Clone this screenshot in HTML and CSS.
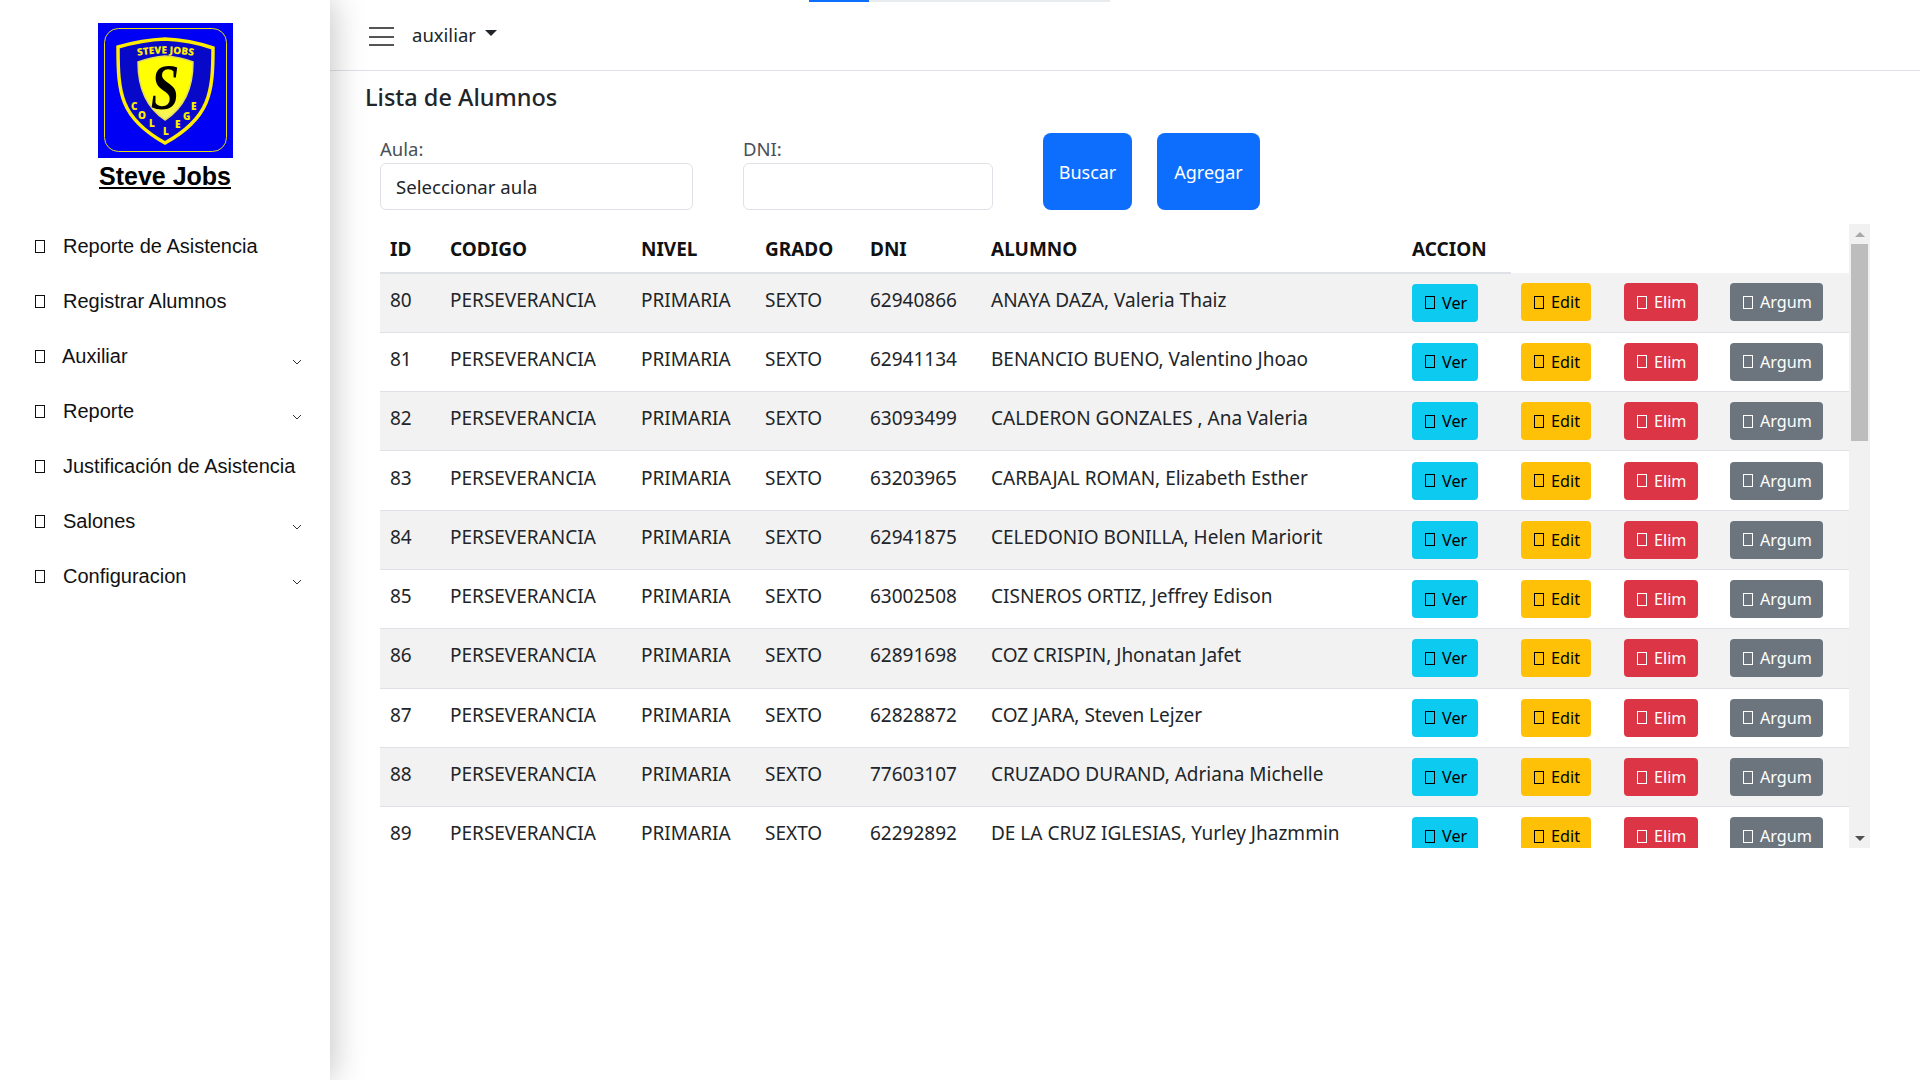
FILE: index.html
```html
<!DOCTYPE html>
<html lang="es">
<head>
  <meta charset="UTF-8">
  <meta name="viewport" content="width=device-width, initial-scale=1.0">
  <title>Lista de Alumnos</title>
  <link rel="stylesheet" href="styles.css">
</head>
<body>
  <div class="top-progress"><div class="top-progress-bar"></div></div>

  <aside class="sidebar">
    <div class="brand">
      <svg class="brand-logo" viewBox="0 0 135 135" width="135" height="135">
        <defs>
          <path id="arc-top" d="M33 34 Q67 27 102 34"/>
          <linearGradient id="inner-fill" x1="0" y1="0" x2="0" y2="1">
            <stop offset="0.6" stop-color="#ffff00"/>
            <stop offset="1" stop-color="#f4f070"/>
          </linearGradient>
        </defs>
        <rect width="135" height="135" fill="#0000f5"/>
        <rect x="6.5" y="5.5" width="122" height="123" rx="14" fill="none" stroke="#e8dc10" stroke-width="1"/>
        <path d="M20 24 Q44 17 67 16 Q92 17 115 25 C115 70 112 95 67 120 C22 95 20 70 20 24Z" fill="#0808c8" stroke="#ffec00" stroke-width="3.5"/>
        <path d="M40 39 Q54 34 67 33 Q82 34 95 39 C95 65 86 85 67 97 C49 85 40 65 40 39Z" fill="url(#inner-fill)" stroke="#e6dc5a" stroke-width="1.5"/>
        <text class="logo-text"><textPath href="#arc-top" startOffset="50%" text-anchor="middle">STEVE JOBS</textPath></text>
        <text class="logo-text" x="33 40 51 65 77 85 93" y="87 96 104 112 105 97 87">COLLEGE</text>
        <text class="logo-s" transform="translate(67 86) scale(0.78 1)" text-anchor="middle">S</text>
      </svg>
      <a class="brand-name" href="#">Steve Jobs</a>
    </div>
    <nav class="menu">
      <a class="menu-item" href="#"><span class="tofu"></span><span class="menu-label">Reporte de Asistencia</span></a>
      <a class="menu-item" href="#"><span class="tofu"></span><span class="menu-label">Registrar Alumnos</span></a>
      <a class="menu-item" href="#"><span class="tofu"></span><span class="menu-label menu-label-tight">Auxiliar</span>
        <svg class="chevron" viewBox="0 0 10 6" width="10" height="6"><path d="M1 1l4 4 4-4" fill="none" stroke="#333" stroke-width="1"/></svg></a>
      <a class="menu-item" href="#"><span class="tofu"></span><span class="menu-label">Reporte</span>
        <svg class="chevron" viewBox="0 0 10 6" width="10" height="6"><path d="M1 1l4 4 4-4" fill="none" stroke="#333" stroke-width="1"/></svg></a>
      <a class="menu-item" href="#"><span class="tofu"></span><span class="menu-label">Justificación de Asistencia</span></a>
      <a class="menu-item" href="#"><span class="tofu"></span><span class="menu-label">Salones</span>
        <svg class="chevron" viewBox="0 0 10 6" width="10" height="6"><path d="M1 1l4 4 4-4" fill="none" stroke="#333" stroke-width="1"/></svg></a>
      <a class="menu-item" href="#"><span class="tofu"></span><span class="menu-label">Configuracion</span>
        <svg class="chevron" viewBox="0 0 10 6" width="10" height="6"><path d="M1 1l4 4 4-4" fill="none" stroke="#333" stroke-width="1"/></svg></a>
    </nav>
  </aside>

  <div class="main">
    <header class="navbar">
      <button class="burger" type="button"><span></span><span></span><span></span></button>
      <span class="user">auxiliar</span>
      <span class="caret"></span>
    </header>

    <section class="content">
      <h2 class="title">Lista de Alumnos</h2>

      <form class="filters">
        <div class="field field-aula">
          <label for="aula">Aula:</label>
          <select id="aula"><option>Seleccionar aula</option></select>
        </div>
        <div class="field field-dni">
          <label for="dni">DNI:</label>
          <input type="text" id="dni">
        </div>
        <button class="btn-big btn-buscar" type="button">Buscar</button>
        <button class="btn-big btn-agregar" type="button">Agregar</button>
      </form>

      <div class="table-box">
        <div class="table-scroll">
          <table>
            <colgroup>
              <col class="c-id"><col class="c-codigo"><col class="c-nivel"><col class="c-grado"><col class="c-dni"><col class="c-alumno">
              <col class="c-ver"><col class="c-edit"><col class="c-elim"><col class="c-argum">
            </colgroup>
            <thead>
              <tr><th>ID</th><th>CODIGO</th><th>NIVEL</th><th>GRADO</th><th>DNI</th><th>ALUMNO</th><th>ACCION</th></tr>
            </thead>
            <tbody>
              <tr><td>80</td><td>PERSEVERANCIA</td><td>PRIMARIA</td><td>SEXTO</td><td>62940866</td><td>ANAYA DAZA, Valeria Thaiz</td>
                <td><a class="btn btn-ver"><span class="tofu"></span>Ver</a></td><td><a class="btn btn-edit"><span class="tofu"></span>Edit</a></td><td><a class="btn btn-elim"><span class="tofu"></span>Elim</a></td><td><a class="btn btn-argum"><span class="tofu"></span>Argum</a></td></tr>
              <tr><td>81</td><td>PERSEVERANCIA</td><td>PRIMARIA</td><td>SEXTO</td><td>62941134</td><td>BENANCIO BUENO, Valentino Jhoao</td>
                <td><a class="btn btn-ver"><span class="tofu"></span>Ver</a></td><td><a class="btn btn-edit"><span class="tofu"></span>Edit</a></td><td><a class="btn btn-elim"><span class="tofu"></span>Elim</a></td><td><a class="btn btn-argum"><span class="tofu"></span>Argum</a></td></tr>
              <tr><td>82</td><td>PERSEVERANCIA</td><td>PRIMARIA</td><td>SEXTO</td><td>63093499</td><td>CALDERON GONZALES , Ana Valeria</td>
                <td><a class="btn btn-ver"><span class="tofu"></span>Ver</a></td><td><a class="btn btn-edit"><span class="tofu"></span>Edit</a></td><td><a class="btn btn-elim"><span class="tofu"></span>Elim</a></td><td><a class="btn btn-argum"><span class="tofu"></span>Argum</a></td></tr>
              <tr><td>83</td><td>PERSEVERANCIA</td><td>PRIMARIA</td><td>SEXTO</td><td>63203965</td><td>CARBAJAL ROMAN, Elizabeth Esther</td>
                <td><a class="btn btn-ver"><span class="tofu"></span>Ver</a></td><td><a class="btn btn-edit"><span class="tofu"></span>Edit</a></td><td><a class="btn btn-elim"><span class="tofu"></span>Elim</a></td><td><a class="btn btn-argum"><span class="tofu"></span>Argum</a></td></tr>
              <tr><td>84</td><td>PERSEVERANCIA</td><td>PRIMARIA</td><td>SEXTO</td><td>62941875</td><td>CELEDONIO BONILLA, Helen Mariorit</td>
                <td><a class="btn btn-ver"><span class="tofu"></span>Ver</a></td><td><a class="btn btn-edit"><span class="tofu"></span>Edit</a></td><td><a class="btn btn-elim"><span class="tofu"></span>Elim</a></td><td><a class="btn btn-argum"><span class="tofu"></span>Argum</a></td></tr>
              <tr><td>85</td><td>PERSEVERANCIA</td><td>PRIMARIA</td><td>SEXTO</td><td>63002508</td><td>CISNEROS ORTIZ, Jeffrey Edison</td>
                <td><a class="btn btn-ver"><span class="tofu"></span>Ver</a></td><td><a class="btn btn-edit"><span class="tofu"></span>Edit</a></td><td><a class="btn btn-elim"><span class="tofu"></span>Elim</a></td><td><a class="btn btn-argum"><span class="tofu"></span>Argum</a></td></tr>
              <tr><td>86</td><td>PERSEVERANCIA</td><td>PRIMARIA</td><td>SEXTO</td><td>62891698</td><td>COZ CRISPIN, Jhonatan Jafet</td>
                <td><a class="btn btn-ver"><span class="tofu"></span>Ver</a></td><td><a class="btn btn-edit"><span class="tofu"></span>Edit</a></td><td><a class="btn btn-elim"><span class="tofu"></span>Elim</a></td><td><a class="btn btn-argum"><span class="tofu"></span>Argum</a></td></tr>
              <tr><td>87</td><td>PERSEVERANCIA</td><td>PRIMARIA</td><td>SEXTO</td><td>62828872</td><td>COZ JARA, Steven Lejzer</td>
                <td><a class="btn btn-ver"><span class="tofu"></span>Ver</a></td><td><a class="btn btn-edit"><span class="tofu"></span>Edit</a></td><td><a class="btn btn-elim"><span class="tofu"></span>Elim</a></td><td><a class="btn btn-argum"><span class="tofu"></span>Argum</a></td></tr>
              <tr><td>88</td><td>PERSEVERANCIA</td><td>PRIMARIA</td><td>SEXTO</td><td>77603107</td><td>CRUZADO DURAND, Adriana Michelle</td>
                <td><a class="btn btn-ver"><span class="tofu"></span>Ver</a></td><td><a class="btn btn-edit"><span class="tofu"></span>Edit</a></td><td><a class="btn btn-elim"><span class="tofu"></span>Elim</a></td><td><a class="btn btn-argum"><span class="tofu"></span>Argum</a></td></tr>
              <tr><td>89</td><td>PERSEVERANCIA</td><td>PRIMARIA</td><td>SEXTO</td><td>62292892</td><td>DE LA CRUZ IGLESIAS, Yurley Jhazmmin</td>
                <td><a class="btn btn-ver"><span class="tofu"></span>Ver</a></td><td><a class="btn btn-edit"><span class="tofu"></span>Edit</a></td><td><a class="btn btn-elim"><span class="tofu"></span>Elim</a></td><td><a class="btn btn-argum"><span class="tofu"></span>Argum</a></td></tr>
            </tbody>
          </table>
        </div>
        <div class="scrollbar">
          <div class="scroll-arrow"><span class="arrow-up"></span></div>
          <div class="scroll-thumb"></div>
          <div class="scroll-track"></div>
          <div class="scroll-arrow"><span class="arrow-down"></span></div>
        </div>
      </div>
    </section>
  </div>
</body>
</html>
```

FILE: styles.css
```css
* {
  box-sizing: border-box;
}
html, body {
  height: 100%;
}
body {
  margin: 0;
  display: flex;
  overflow: hidden;
  font-family: "Noto Sans", "Open Sans", sans-serif;
  font-size: 18px;
  color: #212529;
  background: #fff;
}
.top-progress {
  position: absolute;
  top: 0;
  left: 809px;
  width: 301px;
  height: 2px;
  background: #e9ecef;
}
.top-progress-bar {
  width: 60px;
  height: 2px;
  background: #0d6efd;
}
.tofu {
  display: inline-block;
  flex: none;
  width: 10px;
  height: 13px;
  border: 1px solid currentColor;
}

/* sidebar */
.sidebar {
  flex: none;
  width: 330px;
  height: 100%;
  background: #fff;
  box-shadow: 4px 0 30px rgba(0, 0, 0, 0.22);
  font-family: "Liberation Sans", Arial, sans-serif;
  position: relative;
}
.brand {
  display: flex;
  flex-direction: column;
  align-items: center;
  padding-top: 23px;
}
.brand-logo {
  display: block;
}
.brand-name {
  font-size: 25px;
  font-weight: bold;
  line-height: 36px;
  color: #000;
}
.logo-text {
  font-family: "Open Sans", sans-serif;
  font-size: 10px;
  font-weight: 800;
  fill: #ffec00;
}
.logo-s {
  font-family: "Liberation Serif", serif;
  font-size: 66px;
  font-weight: bold;
  font-style: italic;
  fill: #000;
}
.menu {
  display: flex;
  flex-direction: column;
  padding-top: 25px;
}
.menu-item {
  display: flex;
  align-items: center;
  height: 55px;
  padding: 0 28px 0 35px;
  color: #111;
  text-decoration: none;
  font-size: 20px;
}
.menu-label {
  margin-left: 18px;
}
.menu-label-tight {
  margin-left: 17px;
}
.chevron {
  margin-left: auto;
  margin-top: 10px;
}

/* top bar */
.main {
  flex: 1;
  min-width: 0;
}
.navbar {
  display: flex;
  align-items: center;
  height: 71px;
  padding-left: 39px;
  border-bottom: 1px solid #dee2e6;
}
.burger {
  display: flex;
  flex-direction: column;
  justify-content: space-between;
  width: 25px;
  height: 19px;
  margin-top: 3px;
  padding: 0;
  border: none;
  background: none;
}
.burger span {
  height: 2px;
  background: #555;
}
.user {
  margin-left: 18px;
  margin-bottom: 2px;
  font-size: 18.5px;
  color: #212529;
}
.caret {
  margin-left: 9px;
  margin-bottom: 4px;
  border-top: 6px solid #212529;
  border-left: 6px solid transparent;
  border-right: 6px solid transparent;
}

/* content */
.content {
  padding: 0 50px 0 35px;
}
.title {
  margin: 8px 0 0;
  font-size: 23.5px;
  font-weight: 500;
  line-height: 36px;
}
.filters {
  display: flex;
  align-items: flex-start;
  margin-top: 18px;
  margin-left: 15px;
}
.field {
  display: flex;
  flex-direction: column;
}
.field label {
  line-height: 30px;
  padding-top: 1px;
  height: 30px;
  font-size: 18.5px;
  color: #495057;
}
.field select,
.field input {
  height: 47px;
  border: 1px solid #dee2e6;
  border-radius: 6px;
  background: #fff;
  padding: 0 15px;
  font: inherit;
  font-size: 18.6px;
  color: #212529;
  appearance: none;
}
.field-aula {
  width: 313px;
  margin-right: 50px;
}
.field-dni {
  width: 250px;
  margin-right: 50px;
}
.btn-big {
  height: 77px;
  border: none;
  border-radius: 8px;
  background: #0d6efd;
  color: #fff;
  font: inherit;
  padding: 0;
}
.btn-buscar {
  width: 89px;
  margin-right: 25px;
}
.btn-agregar {
  width: 103px;
}

/* table */
.table-box {
  display: flex;
  height: 624px;
  margin-top: 14px;
  margin-left: 15px;
}
.table-scroll {
  flex: 1;
  min-width: 0;
  overflow: hidden;
}
table {
  width: 1469px;
  table-layout: fixed;
  border-collapse: collapse;
  font-size: 19px;
}
.c-id { width: 60px; }
.c-codigo { width: 191px; }
.c-nivel { width: 124px; }
.c-grado { width: 105px; }
.c-dni { width: 121px; }
.c-alumno { width: 421px; }
.c-ver { width: 109px; }
.c-edit { width: 103px; }
.c-elim { width: 106px; }
.c-argum { width: 129px; }
th {
  height: 49px;
  padding: 1px 10px 0;
  text-align: left;
  font-weight: 700;
  color: #111;
  border-bottom: 2px solid #dee2e6;
}
tbody tr {
  height: 59.3px;
  border-bottom: 1px solid #dee2e6;
}
tbody tr:nth-child(odd) {
  background: #f2f2f2;
}
td {
  padding: 0 10px 6px;
  white-space: nowrap;
}
td:nth-child(n+7) {
  padding-bottom: 0;
}
.btn {
  display: inline-flex;
  align-items: center;
  gap: 7px;
  height: 38px;
  padding: 0 11px 0 13px;
  border-radius: 4px;
  font-size: 16.2px;
  vertical-align: middle;
}
.btn-ver { background: #0dcaf0; color: #000; }
.btn-edit { background: #ffc107; color: #000; }
.btn-elim { background: #dc3545; color: #fff; }
.btn-argum { background: #6c757d; color: #fff; }

/* scrollbar on the right of the table */
.scrollbar {
  flex: none;
  width: 21px;
  display: flex;
  flex-direction: column;
  background: #f1f1f1;
}
.scroll-arrow {
  flex: none;
  height: 20px;
  display: flex;
  align-items: center;
  justify-content: center;
}
.arrow-up {
  border-bottom: 5px solid #a8a8a8;
  border-left: 5px solid transparent;
  border-right: 5px solid transparent;
}
.arrow-down {
  border-top: 5px solid #505050;
  border-left: 5px solid transparent;
  border-right: 5px solid transparent;
}
.scroll-thumb {
  flex: none;
  height: 197px;
  margin: 0 2px;
  background: #bdbdbd;
}
.scroll-track {
  flex: 1;
}
```
